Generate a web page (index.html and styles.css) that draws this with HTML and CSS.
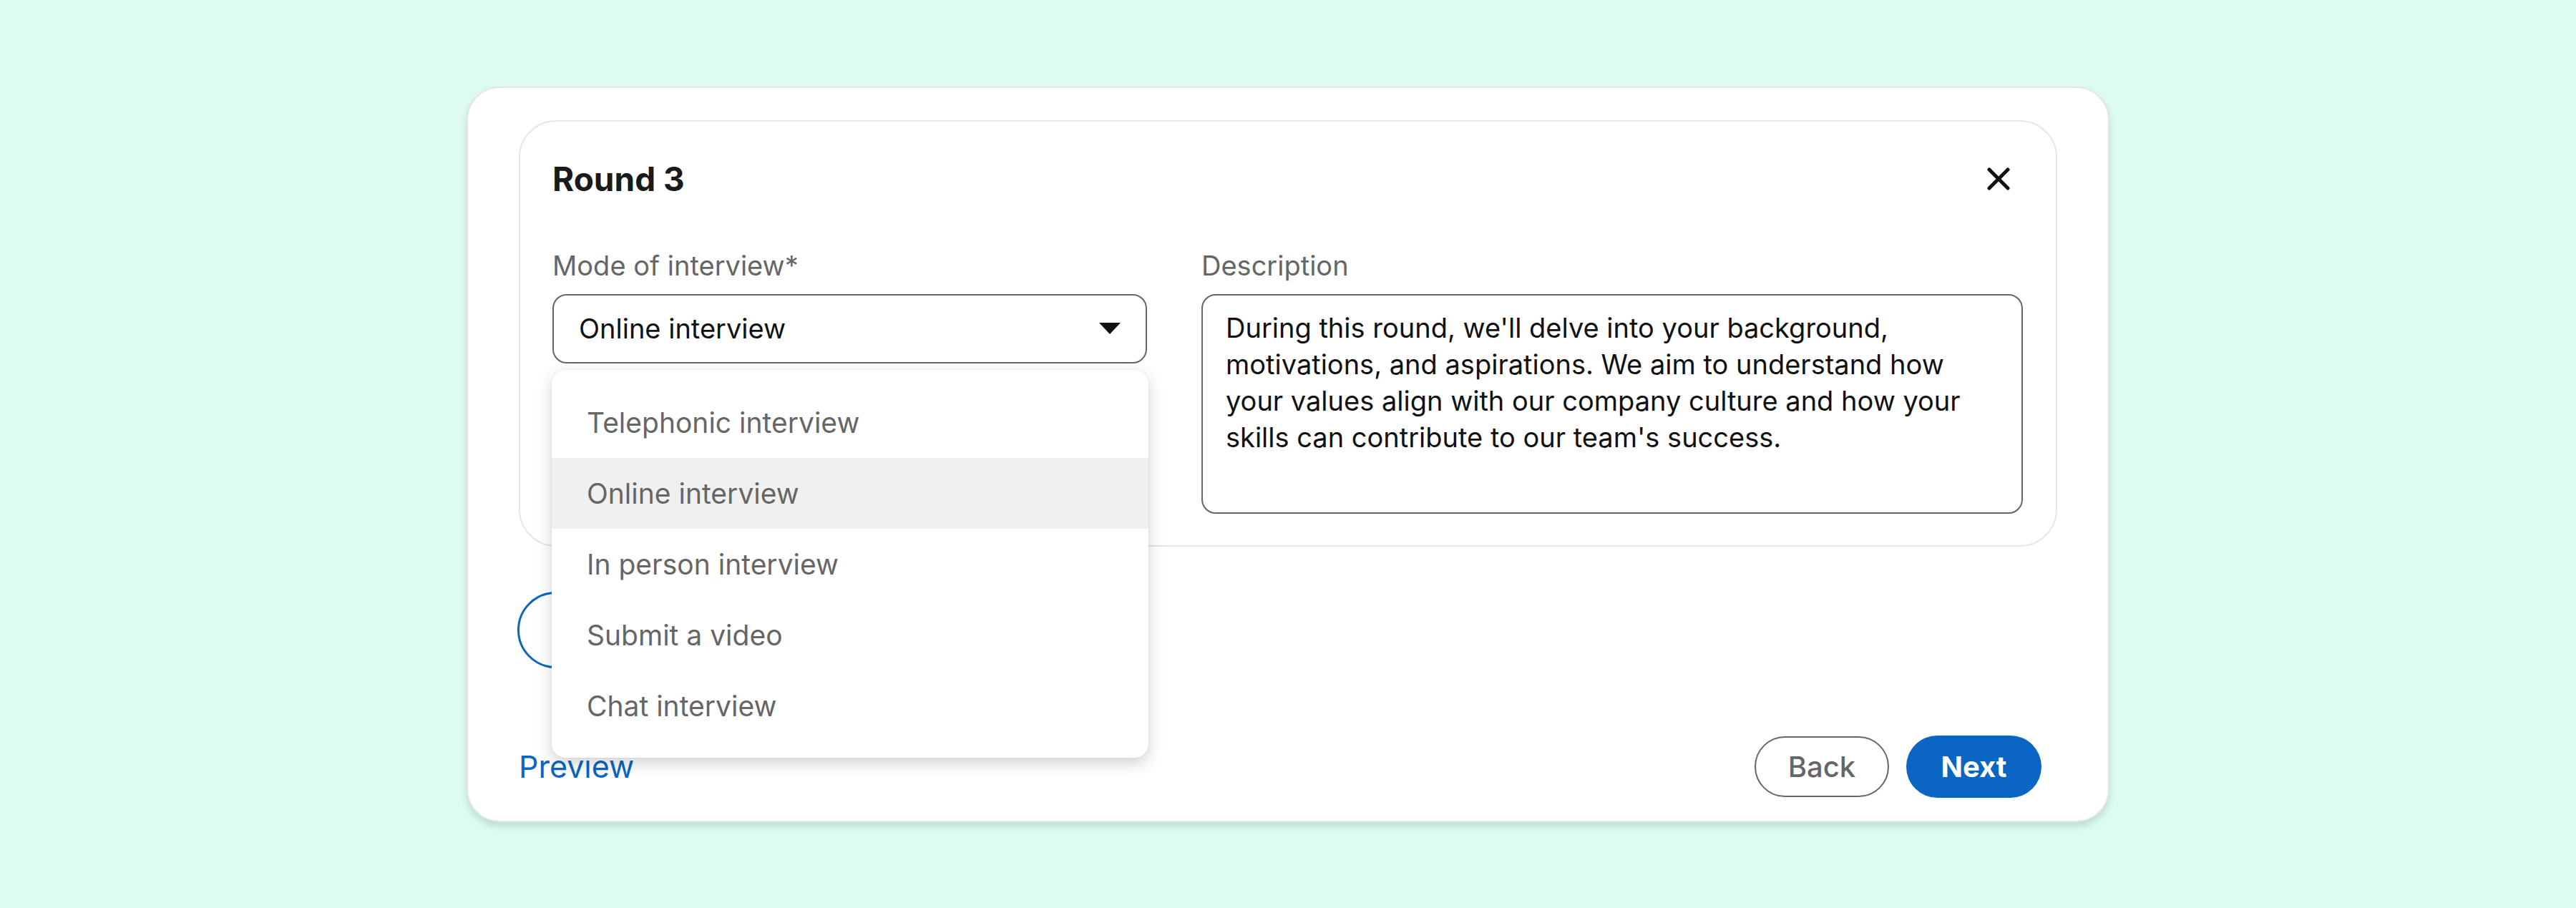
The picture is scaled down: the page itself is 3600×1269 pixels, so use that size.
FILE: index.html
```html
<!DOCTYPE html>
<html lang="en">
<head>
<meta charset="utf-8">
<title>Interview rounds</title>
<link rel="stylesheet" href="styles.css">
</head>
<body>
<div class="modal">
  <div class="round-card">
    <div class="round-header">
      <h2 class="round-title">Round 3</h2>
      <button class="close-btn" aria-label="Close">
        <svg width="32" height="32" viewBox="0 0 32 32"><path d="M3 3 L29 29 M29 3 L3 29" stroke="#111" stroke-width="5" stroke-linecap="round" fill="none"/></svg>
      </button>
    </div>
    <div class="fields">
      <div class="field">
        <label class="field-label">Mode of interview*</label>
        <div class="select-wrap">
          <div class="select">
            <span class="select-value">Online interview</span>
            <span class="select-arrow"></span>
          </div>
          <ul class="dropdown">
            <li class="dropdown-item">Telephonic interview</li>
            <li class="dropdown-item is-active">Online interview</li>
            <li class="dropdown-item">In person interview</li>
            <li class="dropdown-item">Submit a video</li>
            <li class="dropdown-item">Chat interview</li>
          </ul>
        </div>
      </div>
      <div class="field">
        <label class="field-label">Description</label>
        <div class="textarea">During this round, we'll delve into your background,<br>motivations, and aspirations. We aim to understand how<br>your values align with our company culture and how your<br>skills can contribute to our team's success.</div>
      </div>
    </div>
  </div>
  <button class="add-round" aria-label="Add round">
    <svg width="40" height="40" viewBox="0 0 40 40"><path d="M20 4 V36 M4 20 H36" stroke="#0a66c2" stroke-width="4" stroke-linecap="round" fill="none"/></svg>
  </button>
  <div class="footer">
    <a class="preview-link">Preview</a>
    <div class="footer-actions">
      <button class="btn btn-back">Back</button>
      <button class="btn btn-next">Next</button>
    </div>
  </div>
</div>
</body>
</html>
```

FILE: styles.css
```css
* { box-sizing: border-box; }
html, body { margin: 0; padding: 0; }
body {
  width: 3600px;
  height: 1269px;
  background: #ddfcef;
  display: flex;
  align-items: center;
  justify-content: center;
  font-family: "Inter", "Roboto", "Liberation Sans", sans-serif;
}
.modal {
  width: 2296px;
  height: 1028px;
  background: #fff;
  border: 2px solid #e3e6e4;
  border-radius: 46px;
  box-shadow: 0 6px 10px rgba(40, 90, 70, 0.18);
  padding: 45px 71px 32px 71px;
  display: flex;
  flex-direction: column;
}
.round-card {
  border: 2px solid #e6e6e6;
  border-radius: 52px;
  padding: 52px 46px 44px 45px;
}
.round-header {
  display: flex;
  align-items: center;
  justify-content: space-between;
  height: 56px;
  margin-bottom: 70px;
}
.round-title {
  margin: 0;
  font-size: 46px;
  line-height: 56px;
  font-weight: 700;
  color: #1a1a1a;
}
.close-btn {
  background: none;
  border: 0;
  padding: 0;
  margin-right: 18px;
  width: 32px;
  height: 32px;
  display: flex;
}
.fields {
  display: grid;
  grid-template-columns: 831px 1fr;
  column-gap: 76px;
}
.field {
  display: flex;
  flex-direction: column;
  gap: 17px;
}
.field-label {
  font-size: 38px;
  line-height: 46px;
  color: #666;
}
.select-wrap { position: relative; }
.select {
  height: 97px;
  border: 2px solid #666;
  border-radius: 20px;
  display: flex;
  align-items: center;
  justify-content: space-between;
  padding: 0 35px 0 35px;
}
.select-value {
  font-size: 38px;
  color: #111;
}
.select-arrow {
  width: 0;
  height: 0;
  border-left: 15px solid transparent;
  border-right: 15px solid transparent;
  border-top: 16px solid #111;
}
.dropdown {
  position: absolute;
  z-index: 5;
  top: 106px;
  left: -1px;
  width: 834px;
  margin: 0;
  padding: 24px 0 23px;
  list-style: none;
  background: #fff;
  border-radius: 20px;
  box-shadow: 0 8px 22px rgba(0, 0, 0, 0.18), 0 0 3px rgba(0, 0, 0, 0.05);
}
.dropdown-item {
  height: 99px;
  display: flex;
  align-items: center;
  padding-left: 49px;
  font-size: 39px;
  color: #666;
}
.dropdown-item.is-active { background: #f0f0f0; }
.textarea {
  height: 307px;
  border: 2px solid #666;
  border-radius: 20px;
  padding: 20px 30px 0 32px;
  font-size: 38px;
  line-height: 51px;
  color: #111;
}
.add-round {
  align-self: flex-start;
  margin-top: 63px;
  margin-left: -2px;
  width: 320px;
  height: 107px;
  padding: 0;
  border: 3px solid #0a66c2;
  border-radius: 54px;
  background: #fff;
  display: flex;
  align-items: center;
  justify-content: center;
}
.footer {
  margin-top: 94px;
  height: 87px;
  display: flex;
  align-items: center;
  justify-content: space-between;
  padding-right: 22px;
}
.preview-link {
  font-size: 43px;
  color: #0a66c2;
}
.footer-actions {
  display: flex;
  align-items: center;
  gap: 24px;
}
.btn {
  font-family: inherit;
  font-size: 40px;
  border-radius: 999px;
  display: flex;
  align-items: center;
  justify-content: center;
}
.btn-back {
  width: 188px;
  height: 85px;
  background: #fff;
  border: 2px solid #666;
  color: #666;
  font-weight: 500;
}
.btn-next {
  width: 189px;
  height: 87px;
  background: #0a66c2;
  border: 0;
  color: #fff;
  font-weight: 700;
}
```
